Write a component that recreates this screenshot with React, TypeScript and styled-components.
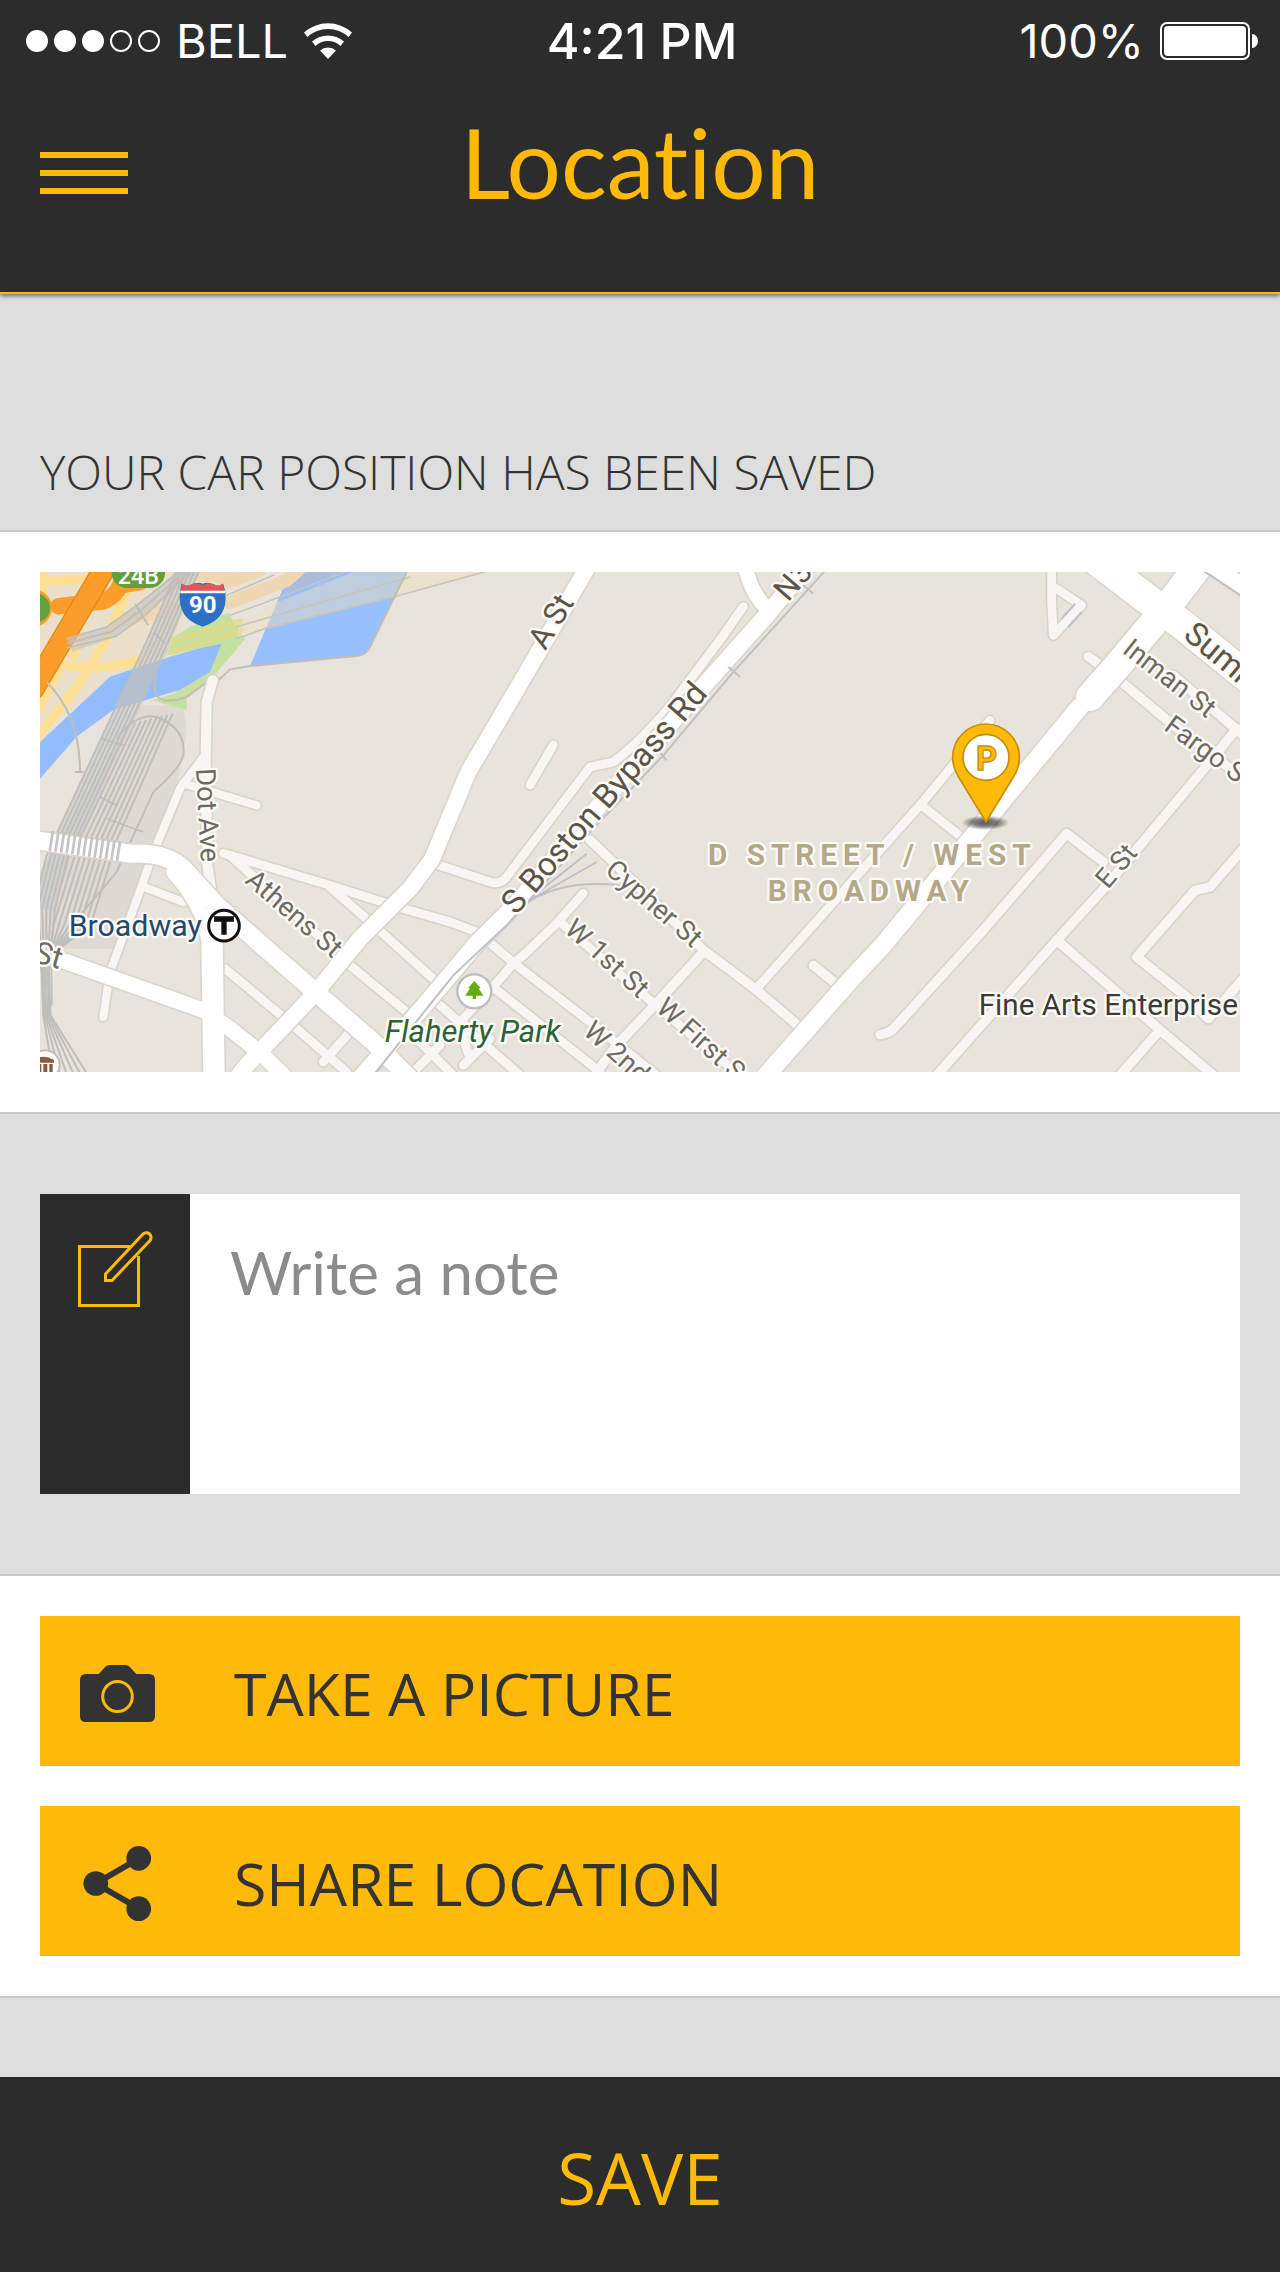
import React from 'react';
import styled, { createGlobalStyle } from 'styled-components';

const color = {
  dark: '#2c2c2c',
  ink: '#333333',
  amber: '#ffb908',
  grey: '#dedede',
  line: '#c8c8c8',
  hint: '#8c8c8c',
};

const GlobalStyle = createGlobalStyle`
  *, *::before, *::after { box-sizing: border-box; }
  body {
    margin: 0;
    background: ${color.grey};
    color: ${color.ink};
    font-family: 'Open Sans', 'Noto Sans', sans-serif;
  }
`;

const Screen = styled.div`
  display: flex;
  flex-direction: column;
  min-height: 100vh;
`;

const Header = styled.header`
  background: ${color.dark};
  border-bottom: 2px solid ${color.amber};
  box-shadow: 0 2px 4px rgba(0, 0, 0, 0.5);
  padding-bottom: 50px;
`;

const StatusBar = styled.div`
  display: grid;
  grid-template-columns: 1fr auto 1fr;
  align-items: center;
  height: 82px;
  padding: 0 22px 0 26px;
  color: #ffffff;
  font-family: Inter, 'Liberation Sans', sans-serif;
  font-size: 47px;
  line-height: 82px;
`;

const StatusGroup = styled.div<{ $end?: boolean }>`
  display: flex;
  align-items: center;
  justify-content: ${(p) => (p.$end ? 'flex-end' : 'flex-start')};
  gap: 16px;
  font-weight: 400;
`;

const Clock = styled.time`
  font-size: 50px;
  font-weight: 500;
`;

const Dots = styled.div`
  display: flex;
  gap: 6px;
`;

const Dot = styled.span<{ $on: boolean }>`
  width: 22px;
  height: 22px;
  border: 2px solid #ffffff;
  border-radius: 50%;
  background: ${(p) => (p.$on ? '#ffffff' : 'transparent')};
`;

const NavBar = styled.div`
  display: grid;
  grid-template-columns: 1fr auto 1fr;
  align-items: center;
  height: 160px;
  padding: 0 40px;
`;

const MenuButton = styled.button`
  display: flex;
  flex-direction: column;
  gap: 12px;
  width: 88px;
  margin-top: 22px;
  padding: 0;
  border: 0;
  background: none;
  cursor: pointer;
`;

const MenuLine = styled.span`
  height: 6px;
  background: ${color.amber};
`;

const Title = styled.h1`
  margin: 0;
  color: ${color.amber};
  font-family: Lato, 'Open Sans', sans-serif;
  font-size: 96px;
  font-weight: 400;
  font-variant-ligatures: none;
  line-height: 160px;
`;

const Banner = styled.p`
  margin: 0;
  padding: 145px 40px 25px;
  font-size: 48px;
  font-weight: 300;
  line-height: 66px;
`;

const Panel = styled.section`
  display: flex;
  flex-direction: column;
  gap: 40px;
  padding: 40px;
  border-top: 2px solid ${color.line};
  border-bottom: 2px solid ${color.line};
  background: #ffffff;
`;

const MapSvg = styled.svg`
  display: block;
  width: 100%;
  height: auto;
  font-family: Roboto, 'Liberation Sans', sans-serif;
`;

const NoteArea = styled.div`
  padding: 80px 40px;
`;

const NoteBox = styled.label`
  display: flex;
  min-height: 300px;
  background: #ffffff;
`;

const NoteBadge = styled.span`
  display: flex;
  justify-content: center;
  width: 150px;
  padding-top: 36px;
  background: ${color.dark};
`;

const NoteInput = styled.textarea`
  flex: 1;
  min-width: 0;
  padding: 36px 40px;
  border: 0;
  outline: 0;
  resize: none;
  background: transparent;
  color: ${color.ink};
  font: 400 60px/84px Lato, 'Open Sans', sans-serif;

  &::placeholder {
    color: ${color.hint};
    opacity: 1;
  }
`;

const ActionButton = styled.button`
  display: flex;
  align-items: center;
  height: 150px;
  padding: 4px 40px 0;
  border: 0;
  background: ${color.amber};
  color: ${color.ink};
  font: 400 59px/84px 'Open Sans', 'Noto Sans', sans-serif;
  text-align: left;
  cursor: pointer;
`;

const ActionIcon = styled.span`
  display: flex;
  width: 154px;
`;

const Spacer = styled.div`
  flex: 1;
  min-height: 79px;
`;

const SaveButton = styled.button`
  height: 195px;
  padding: 6px 40px 0;
  border: 0;
  background: ${color.dark};
  color: ${color.amber};
  font: 400 71px/98px 'Open Sans', 'Noto Sans', sans-serif;
  cursor: pointer;
`;

function WifiIcon() {
  return (
    <svg width="48" height="36" viewBox="0 0 48 36" aria-hidden="true">
      <path d="M0 9.500A36 36 0 0 1 48 9.500L44.500 14A30 30 0 0 0 3.500 14Z" fill="#fff" />
      <path d="M8 18.500A24 24 0 0 1 40 18.500L36.500 23A18 18 0 0 0 11.500 23Z" fill="#fff" />
      <path d="M16 27.500A12 12 0 0 1 32 27.500L24 36Z" fill="#fff" />
    </svg>
  );
}

function BatteryIcon() {
  return (
    <svg width="98" height="38" viewBox="0 0 98 38" role="img" aria-label="Battery full">
      <rect x="1" y="1" width="88" height="36" rx="6" fill="none" stroke="#fff" strokeWidth="2" />
      <rect x="4" y="4" width="82" height="30" rx="4" fill="#fff" />
      <path d="M92 12a6 7 0 0 1 0 14z" fill="#fff" />
    </svg>
  );
}

function NoteIcon() {
  return (
    <svg width="76" height="78" viewBox="0 0 76 78" fill="none" stroke={color.amber} strokeWidth="3" aria-hidden="true">
      <path d="M53 16.500H2.500V75.500H61.500V26" />
      <path d="M28.500 50.500V44L65.500 4.500A4.700 4.700 0 0 1 73 10.500L35 50.500Z" />
    </svg>
  );
}

function CameraIcon() {
  return (
    <svg width="75" height="57" viewBox="0 0 76 57" preserveAspectRatio="none" aria-hidden="true">
      <path
        d="M6 9H19L26 1.500Q27.500 0 30 0H46Q48.500 0 50 1.500L57 9H70Q76 9 76 15V51Q76 57 70 57H6Q0 57 0 51V15Q0 9 6 9Z"
        fill={color.ink}
      />
      <circle cx="38" cy="31.500" r="15" fill="none" stroke={color.amber} strokeWidth="3" />
    </svg>
  );
}

function ShareIcon() {
  return (
    <svg width="75" height="75" viewBox="0 0 76 76" fill={color.ink} aria-hidden="true">
      <path d="M60 12.500L16 38L60 63.500" fill="none" stroke={color.ink} strokeWidth="6" />
      <circle cx="59.500" cy="12.500" r="12.500" />
      <circle cx="16" cy="38" r="12.500" />
      <circle cx="59.500" cy="63.500" r="12.500" />
    </svg>
  );
}

type Road = { d: string; w: number };

const minorRoads: Road[] = [
  { w: 30, d: 'M518 325L500 390L497 560L502 880L518 980' },
  { w: 24, d: 'M490 555L420 650L345 830L290 984L210 1200L190 1335' },
  { w: 24, d: 'M430 634L650 700M310 944L430 990' },
  { w: 26, d: 'M550 844L870 940L1070 1004L1230 1050L1310 1080' },
  { w: 26, d: 'M570 850L900 1150M870 945L990 1050L1190 1230' },
  { w: 26, d: 'M930 1180L1100 1320M555 1190L740 1344L920 1500' },
  { w: 26, d: 'M930 1380L850 1470M1200 1420L1110 1510' },
  { w: 26, d: 'M2110 104L2050 190L1890 404Q1790 520 1720 570L1650 585L1400 915Q1380 940 1350 930L1180 874' },
  { w: 26, d: 'M1540 519L1470 639' },
  { w: 28, d: 'M1650 804L1750 900L1990 1134L2150 1254L2285 1370' },
  { w: 28, d: 'M2320 1180L2400 1245' },
  { w: 28, d: 'M1990 1140L1840 1304L1730 1420L1670 1500' },
  { w: 26, d: 'M1560 1050L1840 1294L2100 1510' },
  { w: 26, d: 'M1630 964L1550 1054L1450 1150Q1420 1170 1390 1210L1270 1340L1270 1400L1290 1460M1270 1480L1350 1400' },
  { w: 26, d: 'M1330 1095L1400 1155L1430 1180L1650 1350L1850 1510' },
  { w: 26, d: 'M1370 1254L1680 1500M1200 1300L1440 1510M1130 1400L1240 1510' },
  { w: 26, d: 'M2850 445L2645 694L2520 834L2430 935L2155 1244' },
  { w: 26, d: 'M2645 700L2770 800' },
  { w: 28, d: 'M3190 870L3080 785L2830 1074L2570 1360Q2550 1385 2520 1388' },
  { w: 28, d: 'M3590 470L3480 605L3200 940L3050 1105L2690 1510' },
  { w: 28, d: 'M3050 1104L3360 1374L3520 1510M3360 1374L3240 1510' },
  { w: 28, d: 'M3610 830L3510 945L3465 955L3290 1155L3440 1275L3505 1340L3610 1220' },
  { w: 26, d: 'M3035 -10V90L3040 190L3125 100L3050 50' },
  { w: 28, d: 'M3145 254L3210 300M3400 310L3610 490' },
  { w: 28, d: 'M3245 330L3400 460L3610 620' },
];

const majorRoads: Road[] = [
  { w: 48, d: 'M1640 -10L1490 250L1285 600L1175 864L1110 950L960 1100L825 1264L620 1480L580 1530' },
  { w: 50, d: 'M2310 -30L2185 124L1980 354L1700 674L1430 994L1310 1114L1150 1304L950 1530' },
  { w: 44, d: 'M2115 -20Q2130 60 2185 115' },
  { w: 54, d: 'M-10 805L270 845Q380 840 430 890L530 1000L820 1255L1000 1410L1120 1530' },
  { w: 64, d: 'M515 1040L522 1520' },
  { w: 44, d: 'M400 900Q490 1000 505 1100' },
  { w: 46, d: 'M-10 1140L70 1166L490 1315L570 1370L670 1450L740 1520' },
  { w: 54, d: 'M3120 404L2790 804L2525 1124L2430 1225L2170 1520' },
  { w: 84, d: 'M3500 -50L3390 94L3230 284L3150 375' },
  { w: 90, d: 'M3150 -50L3340 95L3430 160L3640 330' },
  { w: 50, d: 'M3480 -50L3640 70' },
];

const yellowRoads = [
  'M-10 30L190 20M10 -10V110',
  'M260 60L200 200L120 330L-10 500',
  'M130 120L100 250M50 275Q180 300 290 265M60 290L-10 420',
];

const tanRoads = ['M550 35L660 -5M570 92L740 25L790 -20M240 142L400 112M480 10H560'];

const yardTracks = [0, 16, 32, 48, 64, 80, 96, 112];
const mainTracks = [0, 13, 26, 39, 52, 65];

function Roads({ roads, fill, edge }: { roads: Road[]; fill: string; edge: string }) {
  return (
    <g fill="none" strokeLinecap="round" strokeLinejoin="round">
      {roads.map((r) => (
        <path key={r.d} d={r.d} stroke={edge} strokeWidth={r.w + 10} />
      ))}
      {roads.map((r) => (
        <path key={`${r.d}-top`} d={r.d} stroke={fill} strokeWidth={r.w} />
      ))}
    </g>
  );
}

function Railways() {
  return (
    <g fill="none" stroke="#bebebd" strokeWidth="6">
      <path d="M440 -10L350 230L190 560L60 850L10 1010" stroke="#c4c3c1" strokeOpacity="0.5" strokeWidth="66" />
      <path d="M450 -10L310 110L210 180L90 220" stroke="#c4c3c1" strokeOpacity="0.6" strokeWidth="40" />
      {mainTracks.map((x) => (
        <path
          key={x}
          d={`M${415 + x} -10L${310 + x} 230L${155 + x} 560L${20 + x} 850L${-20 + x} 1010L${5 + x / 3} 1200L${10 + x / 3} 1330L${40 + x * 1.6} 1510`}
        />
      ))}
      {yardTracks.map((x) => (
        <path key={x} d={`M${286 + x} ${452 - x / 4}L${120 + x} 800L${40 + x} 1060L30 1150`} />
      ))}
      {[0, 14, 28].map((x) => (
        <path key={x} strokeWidth="5" d={`M${430 + x} -10L${290 + x} ${100 + x}L${200 + x} ${165 + x}L80 ${200 + x}`} />
      ))}
      <path d="M230 500Q290 420 350 435Q440 470 430 550Q420 590 340 660L230 900L120 1030" />
      <path d="M20 330Q120 430 120 600M105 600H130M285 95L325 160M340 180L375 215" />
      <path d="M185 500L250 520M200 740L310 780M180 675L230 700" strokeWidth="5" />
    </g>
  );
}

type LabelProps = { x: number; y: number; turn?: number; size?: number; children: string };

function StreetLabel({ x, y, turn = 0, size = 82, children }: LabelProps) {
  return (
    <text transform={`translate(${x} ${y}) rotate(${turn})`} fontSize={size}>
      {children}
    </text>
  );
}

function StreetMap() {
  return (
    <MapSvg viewBox="0 0 3600 1500" role="img" aria-label="Map of the saved car position">
      <rect width="3600" height="1500" fill="#e8e4dc" />

      <path d="M0 0H480L400 250L210 330L0 480Z" fill="#ebe0cb" />
      <path d="M300 400L430 400L440 480L400 700L330 840L220 1130H60L0 1200V900Z" fill="#dedad3" />
      <path d="M750 0H1100L990 225Q980 250 950 252L630 282Z" fill="#98bffe" />
      <path d="M760 0H900L730 65Z" fill="#adbcd8" />
      <path d="M0 510L210 314L390 254L560 204L510 304L440 349L350 374L220 414L110 494L0 620Z" fill="#94bdff" />
      <path d="M400 195L450 165L565 122L615 202L510 325L440 375V415L335 385L400 365L510 300L545 215L380 250Z" fill="#c5e1a0" />

      <g fill="none" strokeLinecap="round" strokeLinejoin="round">
        {tanRoads.map((d) => (
          <path key={d} d={d} stroke="#efd7b3" strokeWidth="40" />
        ))}
        <path d="M395 240L600 175M405 205L600 150" stroke="#dedb88" strokeWidth="20" strokeOpacity="0.8" />
        <path d="M700 95L940 0H1350L1060 75L590 195L600 150Z" fill="#efdfba" fillOpacity="0.45" />
        <path
          d="M560 70L700 10M570 130L720 75L940 -10M590 165L690 135L1110 15M590 200L680 168L1060 75L1350 -5"
          stroke="#c9c4b8"
          strokeWidth="5"
        />
        {yellowRoads.map((d) => (
          <path key={d} d={d} stroke="#ffdf94" strokeWidth="28" />
        ))}
        <path d="M55 103L190 88Q230 70 240 40L300 30" stroke="#fb9d28" strokeWidth="50" />
        <circle cx="-20" cy="108" r="56" fill="#fb9d28" />
        <path d="M205 -30L-20 350" stroke="#e08a1e" strokeWidth="68" />
        <path d="M205 -30L-20 350" stroke="#fb9d28" strokeWidth="60" />
      </g>

      <Railways />
      <path d="M350 310Q330 370 370 385Q430 390 460 360L530 310M530 330L570 292L630 282L950 252Q980 250 990 225L1100 0" fill="none" stroke="#c3beb4" strokeWidth="6" />

      <Roads roads={minorRoads} fill="#f7f6f2" edge="#d9d4ca" />
      <Roads roads={majorRoads} fill="#ffffff" edge="#dbd6cc" />

      <path d="M30 806L240 838" stroke="#c4c4c4" strokeWidth="60" strokeDasharray="8 9" />
      <path d="M20 1080V1300M32 1100L36 1300" stroke="#c4c4c4" strokeWidth="6" />
      <g fill="none" stroke="#bfc1c4" strokeWidth="6">
        <path d="M2370 -20L2080 300L1870 550L1660 770L1400 1060L1240 1210L1000 1510" />
        <path d="M2065 285L2100 315M2290 40L2320 65M1855 535L1880 565" />
        <path d="M1470 980L1640 845M1460 990L1670 870M1450 1000Q1560 920 1740 940" />
        <path d="M3480 -10L3610 75M3065 140L3105 95M3085 165L3125 120" />
      </g>

      <g fill="#5b5546" stroke="#fbfaf7" strokeWidth="14" strokeLinejoin="round" paintOrder="stroke">
        <StreetLabel x={1516} y={238} turn={-59} size={94}>A St</StreetLabel>
        <StreetLabel x={1428} y={1032} turn={-49} size={99}>S Boston Bypass Rd</StreetLabel>
        <StreetLabel x={2244} y={92} turn={-49} size={94}>N3</StreetLabel>
        <StreetLabel x={3426} y={195} turn={40} size={98}>Summ</StreetLabel>
      </g>
      <g fill="#6f6a5e" stroke="#fbfaf7" strokeWidth="14" strokeLinejoin="round" paintOrder="stroke">
        <StreetLabel x={1692} y={900} turn={41}>Cypher St</StreetLabel>
        <StreetLabel x={1570} y={1078} turn={42}>W 1st St</StreetLabel>
        <StreetLabel x={1844} y={1314} turn={42}>W First S</StreetLabel>
        <StreetLabel x={1626} y={1384} turn={42}>W 2nd</StreetLabel>
        <StreetLabel x={612} y={930} turn={41}>Athens St</StreetLabel>
        <StreetLabel x={468} y={590} turn={87} size={82}>Dot Ave</StreetLabel>
        <StreetLabel x={-24} y={1168} turn={16} size={92}>St</StreetLabel>
        <StreetLabel x={3244} y={240} turn={38}>Inman St</StreetLabel>
        <StreetLabel x={3368} y={472} turn={36}>Fargo S</StreetLabel>
        <StreetLabel x={3204} y={954} turn={-50}>E St</StreetLabel>
      </g>

      <g stroke="#fbfaf7" strokeWidth="14" strokeLinejoin="round" paintOrder="stroke">
        <g fill="#b5a888" fontSize="89" fontWeight="700" letterSpacing="18" textAnchor="middle">
          <text x="2497" y="879">D STREET / WEST</text>
          <text x="2494" y="986">BROADWAY</text>
        </g>
        <text x="86" y="1092" fontSize="91" fill="#23476b">Broadway</text>
        <text x="1034" y="1411" fontSize="93" fontStyle="italic" fill="#2f6136">Flaherty Park</text>
        <text x="2816" y="1329" fontSize="89" fill="#3c3a38">Fine Arts Enterprise</text>
      </g>

      <circle cx="552" cy="1061" r="46" fill="#ffffff" stroke="#111111" strokeWidth="9" />
      <path d="M522 1041H582M552 1041V1088" stroke="#111111" strokeWidth="16" />

      <circle cx="1303" cy="1258" r="51" fill="#ffffff" stroke="#bdbdbd" strokeWidth="7" />
      <path d="M1303 1227L1322 1249H1316L1330 1271H1308V1281H1298V1271H1276L1290 1249H1284Z" fill="#66a80f" />

      <circle cx="15" cy="1479" r="44" fill="#ffffff" stroke="#c4beb4" strokeWidth="6" />
      <path d="M-20 1464Q10 1444 42 1464V1472H-20ZM-10 1476H4V1500H-10ZM10 1476H22V1500H10ZM28 1476H38V1500H28Z" fill="#8a5a3c" />

      <rect x="215" y="-50" width="160" height="98" rx="46" fill="#639f3c" />
      <text x="295" y="35" fontSize="70" fontWeight="500" fill="#ffffff" textAnchor="middle">24B</text>
      <circle cx="-14" cy="108" r="44" fill="#639f3c" />

      <path d="M424 36Q440 48 456 36Q488 28 488 38Q488 28 520 36Q536 48 550 36L556 60Q566 140 488 164Q410 140 420 60Z" fill="#2e6fc4" />
      <path d="M426 34Q440 46 456 36Q475 32 488 40Q501 32 520 36Q536 46 548 34L552 58H422Z" fill="#de5a5a" />
      <path d="M421 60H555" stroke="#ffffff" strokeWidth="7" />
      <text x="488" y="122" fontSize="72" fontWeight="700" fill="#ffffff" textAnchor="middle">90</text>

      <defs>
        <radialGradient id="pin-shadow">
          <stop offset="0" stopColor="#000000" stopOpacity="0.65" />
          <stop offset="0.5" stopColor="#000000" stopOpacity="0.5" />
          <stop offset="1" stopColor="#000000" stopOpacity="0" />
        </radialGradient>
      </defs>
      <ellipse cx="2836" cy="752" rx="72" ry="22" fill="url(#pin-shadow)" />
      <path
        d="M2838 750L2754 612Q2738 586 2738 556A100 100 0 0 1 2938 556Q2938 586 2922 612Z"
        fill={color.amber}
        stroke="#c48f0a"
        strokeWidth="5"
      />
      <circle cx="2838" cy="556" r="69" fill="#ffffff" stroke="#c48f0a" strokeWidth="5" />
      <text x="2840" y="593" fontSize="98" fontWeight="700" fontFamily="Inter, sans-serif" fill={color.amber} stroke="#c48f0a" strokeWidth="4" textAnchor="middle">P</text>
    </MapSvg>
  );
}

export default function App() {
  return (
    <Screen>
      <GlobalStyle />
      <Header>
        <StatusBar>
          <StatusGroup>
            <Dots role="img" aria-label="Signal: 3 of 5">
              {[1, 2, 3, 4, 5].map((n) => (
                <Dot key={n} $on={n <= 3} />
              ))}
            </Dots>
            <span>BELL</span>
            <WifiIcon />
          </StatusGroup>
          <Clock>4:21 PM</Clock>
          <StatusGroup $end>
            <span>100%</span>
            <BatteryIcon />
          </StatusGroup>
        </StatusBar>
        <NavBar>
          <MenuButton type="button" aria-label="Menu">
            <MenuLine />
            <MenuLine />
            <MenuLine />
          </MenuButton>
          <Title>Location</Title>
        </NavBar>
      </Header>

      <Banner>YOUR CAR POSITION HAS BEEN SAVED</Banner>

      <Panel>
        <StreetMap />
      </Panel>

      <NoteArea>
        <NoteBox>
          <NoteBadge>
            <NoteIcon />
          </NoteBadge>
          <NoteInput placeholder="Write a note" aria-label="Note" />
        </NoteBox>
      </NoteArea>

      <Panel>
        <ActionButton type="button">
          <ActionIcon>
            <CameraIcon />
          </ActionIcon>
          TAKE A PICTURE
        </ActionButton>
        <ActionButton type="button">
          <ActionIcon>
            <ShareIcon />
          </ActionIcon>
          SHARE LOCATION
        </ActionButton>
      </Panel>

      <Spacer />
      <SaveButton type="button">SAVE</SaveButton>
    </Screen>
  );
}
